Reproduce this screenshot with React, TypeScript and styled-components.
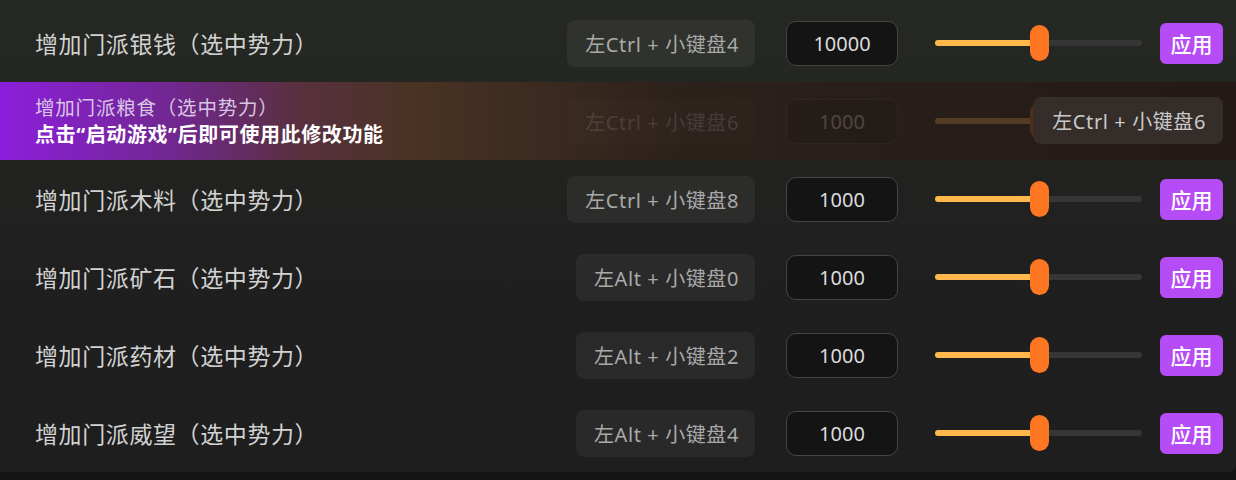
import styled, { createGlobalStyle } from "styled-components";

const GlobalStyle = createGlobalStyle`
  html, body {
    margin: 0;
    padding: 0;
    background: #141414;
    font-family: "Noto Sans", "Noto Sans CJK SC", sans-serif;
  }
`;

const Panel = styled.div`
  width: 1236px;
  padding-top: 4px;
  background: linear-gradient(180deg, #262923 0%, #232521 25%, #1f1f1f 60%, #1e1e1e 100%);
  border-radius: 0 0 8px 0;
`;

const Row = styled.div<{ $active?: boolean }>`
  position: relative;
  display: flex;
  align-items: center;
  height: 78px;
  padding: 0 13px 0 35px;
  box-sizing: border-box;
  background: ${(p) =>
    p.$active
      ? "linear-gradient(90deg, #8c1fdc 0%, #712790 14%, #59303f 24%, #4a3324 33%, #2c211b 55%, #231a17 100%)"
      : "transparent"};
`;

const Label = styled.div`
  flex: 1;
  font-size: 23px;
  letter-spacing: 0.6px;
  color: #d2d2d2;
`;

const Hint = styled.div`
  flex: 1;
  display: flex;
  flex-direction: column;
  line-height: 27px;
`;

const HintTitle = styled.div`
  font-size: 19.5px;
  letter-spacing: 0.8px;
  color: #d9c6e6;
`;

const HintText = styled.div`
  font-size: 20px;
  font-weight: 700;
  letter-spacing: 0.6px;
  color: #ffffff;
`;

const Controls = styled.div<{ $faded?: boolean }>`
  display: flex;
  align-items: center;
  opacity: ${(p) => (p.$faded ? 0.2 : 1)};
`;

const Hotkey = styled.div`
  height: 47px;
  display: flex;
  align-items: center;
  padding: 0 16px 0 18px;
  border-radius: 8px;
  background: rgba(255, 255, 255, 0.05);
  color: #a9a9a9;
  font-size: 20px;
  letter-spacing: 0.6px;
  white-space: nowrap;
`;

const ValueBox = styled.div`
  width: 112px;
  height: 45px;
  margin-left: 31px;
  box-sizing: border-box;
  display: flex;
  align-items: center;
  justify-content: center;
  border: 1.5px solid #444444;
  border-radius: 10px;
  background: #141414;
  color: #dcdcdc;
  font-size: 20px;
`;

const Slider = styled.div`
  position: relative;
  width: 207px;
  height: 36px;
  margin-left: 37px;
  display: flex;
  align-items: center;
`;

const Track = styled.div`
  position: relative;
  width: 100%;
  height: 6px;
  border-radius: 3px;
  background: #363636;
`;

const Fill = styled.div`
  height: 100%;
  border-radius: 3px;
  background: #ffb84c;
`;

const Thumb = styled.div`
  position: absolute;
  top: 0;
  width: 19px;
  height: 36px;
  margin-left: -9px;
  border-radius: 10px;
  background: #ff7622;
`;

const ApplyButton = styled.button`
  width: 63px;
  height: 41px;
  margin-left: 18px;
  border: none;
  border-radius: 6px;
  background: #b64cf6;
  color: #ffffff;
  font-family: inherit;
  font-size: 21px;
  font-weight: 500;
  padding: 0;
`;

const HotkeyTip = styled.div`
  position: absolute;
  right: 13px;
  top: 15px;
  height: 47px;
  display: flex;
  align-items: center;
  padding: 0 17px 0 19px;
  border-radius: 8px;
  background: #352d2a;
  color: #c9c9c9;
  font-size: 20px;
  letter-spacing: 0.6px;
  white-space: nowrap;
`;

type Item = {
  name: string;
  keys: string;
  value: string;
  active?: boolean;
};

const items: Item[] = [
  { name: "增加门派银钱（选中势力）", keys: "左Ctrl + 小键盘4", value: "10000" },
  { name: "增加门派粮食（选中势力）", keys: "左Ctrl + 小键盘6", value: "1000", active: true },
  { name: "增加门派木料（选中势力）", keys: "左Ctrl + 小键盘8", value: "1000" },
  { name: "增加门派矿石（选中势力）", keys: "左Alt + 小键盘0", value: "1000" },
  { name: "增加门派药材（选中势力）", keys: "左Alt + 小键盘2", value: "1000" },
  { name: "增加门派威望（选中势力）", keys: "左Alt + 小键盘4", value: "1000" },
];

function CheatRow({ name, keys, value, active }: Item) {
  const pos = 50;
  return (
    <Row $active={active}>
      {active ? (
        <Hint>
          <HintTitle>{name}</HintTitle>
          <HintText>点击“启动游戏”后即可使用此修改功能</HintText>
        </Hint>
      ) : (
        <Label>{name}</Label>
      )}
      <Controls $faded={active}>
        <Hotkey>{keys}</Hotkey>
        <ValueBox>{value}</ValueBox>
        <Slider>
          <Track>
            <Fill style={{ width: `${pos}%` }} />
          </Track>
          <Thumb style={{ left: `${pos}%` }} />
        </Slider>
        <ApplyButton>应用</ApplyButton>
      </Controls>
      {active && <HotkeyTip>{keys}</HotkeyTip>}
    </Row>
  );
}

export default function App() {
  return (
    <>
      <GlobalStyle />
      <Panel>
        {items.map((it) => (
          <CheatRow key={it.name} {...it} />
        ))}
      </Panel>
    </>
  );
}
